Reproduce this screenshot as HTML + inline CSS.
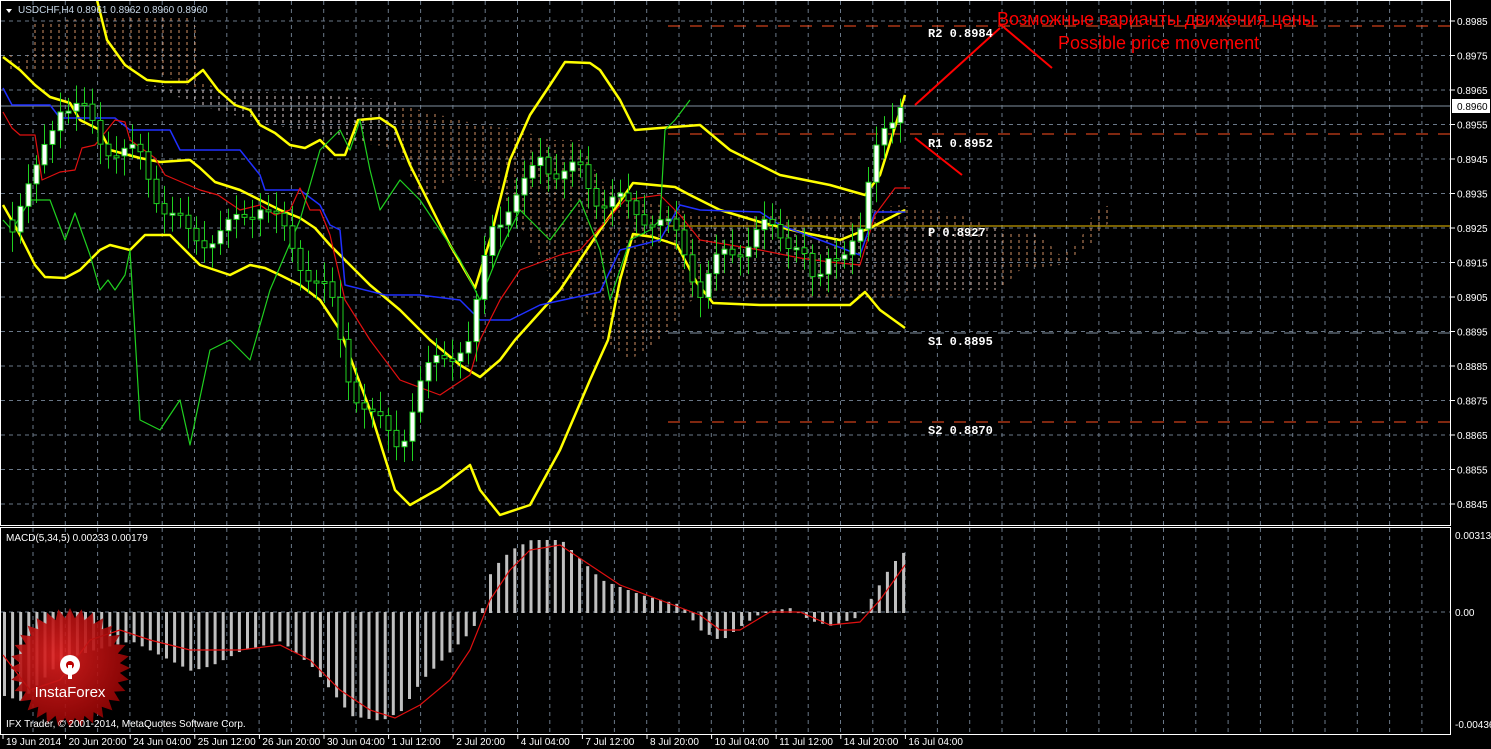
<!DOCTYPE html>
<html><head><meta charset="utf-8">
<style>
html,body{margin:0;padding:0;background:#000;width:1491px;height:749px;overflow:hidden}
svg{display:block}
text{font-family:"Liberation Sans",sans-serif}
.ax{fill:#fff;font-size:10px}
.mono{font-family:"Liberation Mono",monospace;fill:#fff;font-size:12px;font-weight:bold}
</style></head><body>
<svg id="s" width="1491" height="749" xmlns="http://www.w3.org/2000/svg">
<defs>
<pattern id="hatchO" width="8" height="6" patternUnits="userSpaceOnUse"><line x1="3" y1="0" x2="3" y2="3" stroke="#e8a070" stroke-width="1"/></pattern>
<pattern id="hatchW" width="8" height="6" patternUnits="userSpaceOnUse"><line x1="3" y1="0" x2="3" y2="3" stroke="#e0d0d0" stroke-width="1"/></pattern>
<radialGradient id="lg" cx="0.4" cy="0.4" r="0.7"><stop offset="0" stop-color="#e02020"/><stop offset="1" stop-color="#8a0000"/></radialGradient>
</defs>
<rect width="1491" height="749" fill="#000"/>
<g id="grid"></g>
<polygon points="3,50 25,65 35,22 60,20 100,18 190,16 200,35 200,80 230,95 245,105 400,105 480,125 520,130 550,140 580,140 600,180 620,190 640,200 660,205 700,215 760,215 860,215 880,208 900,205 960,215 1000,230 1040,235 1060,255 1080,240 1095,210 1110,205 1115,215 1090,245 1060,265 1020,270 1000,290 940,290 860,300 800,300 760,300 700,290 660,340 630,360 600,340 580,300 560,290 540,260 500,190 460,175 420,200 400,150 350,140 300,130 250,120 200,90 150,70 60,70 10,70" fill="url(#hatchO)" opacity="0.9"/>
<polygon points="145,85 400,100 400,140 350,140 300,130 250,120 200,105" fill="url(#hatchW)"/>
<polygon points="700,225 1000,225 1000,290 700,290" fill="url(#hatchW)" opacity="0.7"/>
<line x1="668" y1="26" x2="1451" y2="26" stroke="#ff5020" stroke-dasharray="12,10"/>
<line x1="668" y1="134" x2="1451" y2="134" stroke="#ff5020" stroke-dasharray="12,10"/>
<line x1="668" y1="226" x2="1451" y2="226" stroke="#f0c000"/>
<line x1="668" y1="333" x2="1451" y2="333" stroke="#8090a0" stroke-dasharray="12,10"/>
<line x1="668" y1="422" x2="1451" y2="422" stroke="#ff5020" stroke-dasharray="12,10"/>
<line x1="0" y1="106" x2="1451" y2="106" stroke="#8090a0"/>
<g id="ind"></g>
<g id="candles"></g>
<g id="macd"></g>
<line x1="915" y1="105" x2="1000" y2="28" stroke="#f00" stroke-width="2"/>
<line x1="1000" y1="24" x2="1052" y2="68" stroke="#f00" stroke-width="2"/>
<line x1="915" y1="138" x2="962" y2="175" stroke="#f00" stroke-width="2"/>
<text x="997" y="25" fill="#f00" font-size="18">Возможные варианты движения цены</text>
<text x="1058" y="49" fill="#f00" font-size="18">Possible price movement</text>
<text x="928" y="37" class="mono">R2 0.8984</text>
<text x="928" y="147" class="mono">R1 0.8952</text>
<text x="928" y="236" class="mono">P  0.8927</text>
<text x="928" y="345" class="mono">S1 0.8895</text>
<text x="928" y="434" class="mono">S2 0.8870</text>
<rect x="0.5" y="0.5" width="1450" height="525" fill="none" stroke="#fff"/>
<rect x="0.5" y="527.5" width="1450" height="207" fill="none" stroke="#fff"/>
<path d="M6 9 L12 9 L9 13Z" fill="#fff"/>
<text x="18" y="13" class="ax" style="fill:#c8d8e8">USDCHF,H4  0.8961 0.8962 0.8960 0.8960</text>
<text x="6" y="541" class="ax">MACD(5,34,5) 0.00233 0.00179</text>
<g transform="translate(70,668)">
<polygon id="star" fill="url(#lg)" opacity="0.9"/>
<circle cx="0" cy="-3" r="10" fill="#fff"/><circle cx="0" cy="-3" r="4" fill="#b00"/>
<rect x="-2" y="-3" width="4" height="14" fill="#fff"/>
<text x="0" y="29" text-anchor="middle" fill="#fff" font-size="15">InstaForex</text>
</g>
<text x="6" y="727" class="ax">IFX Trader, © 2001-2014, MetaQuotes Software Corp.</text>
<g id="axis" class="ax"></g>
</svg>
<script>
const NS="http://www.w3.org/2000/svg";
function el(p,t,a,txt){const e=document.createElementNS(NS,t);for(const k in a)e.setAttribute(k,a[k]);if(txt)e.textContent=txt;document.getElementById(p).appendChild(e);return e;}
for(let x=33;x<1450;x+=32.3){el('grid','line',{x1:x,y1:1,x2:x,y2:525,stroke:'#6a7888','stroke-dasharray':'4,4'});el('grid','line',{x1:x,y1:528,x2:x,y2:734,stroke:'#6a7888','stroke-dasharray':'4,4'});}
for(let i=0;i<15;i++){let y=21+i*34.5;el('grid','line',{x1:1,y1:y,x2:1450,y2:y,stroke:'#6a7888','stroke-dasharray':'4,4'});
 el('axis','line',{x1:1451,y1:y,x2:1455,y2:y,stroke:'#fff'});
 el('axis','text',{x:1457,y:y+4},(0.8985-i*0.001).toFixed(4));}
el('grid','line',{x1:1,y1:612,x2:1450,y2:612,stroke:'#6a7888','stroke-dasharray':'4,4'});
el('axis','rect',{x:1452,y:99,width:38,height:14,fill:'#fff'});
el('axis','text',{x:1457,y:110,style:'fill:#000'},'0.8960');
[['0.00313',539],['0.00',616],['-0.00436',728]].forEach(a=>el('axis','text',{x:1455,y:a[1]},a[0]));
const tl=['19 Jun 2014','20 Jun 20:00','24 Jun 04:00','25 Jun 12:00','26 Jun 20:00','30 Jun 04:00','1 Jul 12:00','2 Jul 20:00','4 Jul 04:00','7 Jul 12:00','8 Jul 20:00','10 Jul 04:00','11 Jul 12:00','14 Jul 20:00','16 Jul 04:00'];
tl.forEach((t,i)=>{let x=i==0?3:1+i*64.6;el('axis','line',{x1:x,y1:735,x2:x,y2:739,stroke:'#fff'});el('axis','text',{x:x+3,y:745},t);});
function interp(pts,x){for(let i=1;i<pts.length;i++){if(x<=pts[i][0]){const a=pts[i-1],b=pts[i];return a[1]+(b[1]-a[1])*(x-a[0])/(b[0]-a[0]);}}return pts[pts.length-1][1];}
function pl(pts,col,w){el('ind','polyline',{points:pts.map(p=>p.join(',')).join(' '),fill:'none',stroke:col,'stroke-width':w,'stroke-linejoin':'round'});}
// lower band
pl([[3,205],[20,235],[35,265],[45,277],[65,278],[80,270],[100,250],[110,245],[130,250],[145,235],[170,235],[185,250],[200,265],[215,270],[230,275],[250,265],[265,268],[280,275],[300,285],[320,300],[340,330],[370,410],[395,490],[410,505],[440,488],[470,465],[480,490],[500,515],[530,505],[560,450],[590,380],[608,340],[620,280],[633,234],[653,237],[677,245],[697,283],[713,303],[760,305],[820,305],[850,305],[865,292],[880,310],[905,328]],'#ff0',2.5);
// upper band
pl([[97,0],[107,40],[125,65],[147,80],[165,82],[188,82],[203,70],[218,90],[235,105],[250,110],[260,125],[275,133],[290,145],[305,148],[320,140],[335,155],[345,155],[358,120],[380,118],[395,128],[410,165],[420,185],[435,215],[450,245],[475,288],[490,240],[510,160],[530,115],[550,85],[565,62],[590,63],[600,70],[620,100],[635,130],[660,128],[700,125],[730,150],[780,175],[830,185],[865,195],[880,175],[905,95]],'#ff0',2.5);
// middle band
pl([[3,57],[20,70],[35,85],[50,97],[70,103],[80,120],[100,130],[110,150],[140,158],[160,162],[190,160],[200,168],[215,182],[240,190],[260,200],[280,210],[300,218],[315,228],[330,245],[350,265],[370,285],[400,310],[430,340],[460,365],[480,377],[500,360],[515,340],[560,290],[600,230],[633,183],[675,187],[690,195],[720,210],[760,222],[800,232],[840,240],[870,228],[905,210]],'#ff0',2.5);
// blue
pl([[3,88],[12,105],[50,105],[60,118],[115,118],[130,130],[170,130],[180,150],[240,150],[260,175],[265,190],[300,190],[320,205],[330,225],[340,230],[345,285],[385,295],[420,295],[460,300],[480,320],[510,320],[540,305],[600,292],[620,250],[660,240],[680,205],[700,210],[760,212],[780,225],[820,240],[860,255],[875,212],[905,212]],'#2030ff',1.5);
// red
pl([[3,112],[12,128],[20,135],[35,135],[42,180],[60,172],[75,170],[82,148],[95,145],[115,120],[125,122],[130,140],[155,158],[165,175],[200,190],[218,195],[240,210],[260,205],[275,215],[290,210],[300,188],[310,210],[320,210],[330,235],[345,300],[370,340],[400,380],[440,395],[470,375],[480,340],[500,300],[520,270],[560,255],[580,250],[625,200],[660,195],[680,215],[700,240],[760,250],[800,258],[830,262],[860,265],[875,215],[895,188],[910,188]],'#e01010',1.2);
// green
pl([[3,220],[12,230],[30,200],[50,200],[65,240],[75,213],[90,255],[100,290],[108,280],[115,290],[125,275],[130,250],[140,420],[160,430],[180,400],[190,445],[210,350],[230,340],[250,360],[270,290],[300,220],[320,150],[340,130],[350,150],[360,120],[370,170],[380,210],[400,180],[420,200],[440,230],[460,260],[480,300],[500,250],[520,210],[550,240],[580,200],[600,250],[610,300],[630,240],[650,230],[660,220],[665,130],[675,120],[690,100]],'#20d020',1.2);
const cp=[[12,220],[20,200],[35,180],[60,100],[80,110],[100,140],[140,160],[160,200],[190,240],[230,230],[260,200],[300,260],[330,300],[350,380],[370,420],[400,440],[420,390],[440,350],[470,350],[490,220],[520,200],[540,150],[560,180],[580,170],[600,200],[640,210],[680,240],[700,290],[720,260],[760,230],[800,240],[815,300],[830,250],[860,240],[880,120],[905,105]];
let prev=interp(cp,12);
for(let x=12;x<=905;x+=8){let c=interp(cp,x)+Math.sin(x*1.7)*12;let o=prev;let top=Math.min(o,c),bot=Math.max(o,c);if(bot-top<2)bot=top+2;
 el('candles','line',{x1:x+0.5,y1:top-8-Math.abs(Math.cos(x))*12,x2:x+0.5,y2:bot+8+Math.abs(Math.sin(x*3))*12,stroke:'#20d020'});
 el('candles','rect',{x:x-2,y:top,width:5,height:bot-top,fill:c<o?'#fff':'#000',stroke:'#20d020'});prev=c;}
const hp=[[3,695],[20,700],[40,680],[60,660],[90,650],[130,640],[150,650],[190,670],[210,665],[240,650],[280,640],[310,665],[330,690],[350,715],[380,720],[400,710],[420,680],[440,660],[470,630],[480,612],[490,570],[510,550],[530,540],[560,540],[580,560],[600,580],[640,595],[680,605],[700,630],[720,640],[740,625],[760,612],[790,608],[810,620],[830,625],[860,615],[875,590],[890,565],[905,550]];
for(let x=3;x<=908;x+=8.1){let y=interp(hp,x);el('macd','rect',{x:x,y:Math.min(y,612),width:3,height:Math.abs(y-612)+1,fill:'#c0c0c0'});}
el('macd','polyline',{points:'3,655 30,690 60,680 90,640 120,630 150,640 190,650 240,650 280,645 310,660 340,690 370,710 395,718 420,705 450,680 470,650 490,600 510,570 530,550 560,545 590,565 620,585 660,600 700,615 720,630 740,630 770,612 800,612 830,625 860,622 880,600 905,565',fill:'none',stroke:'#e01010','stroke-width':1.2});
let pts=[];for(let i=0;i<64;i++){let r=i%2?50:60,a=i*Math.PI/32;pts.push((r*Math.cos(a)).toFixed(1)+','+(r*Math.sin(a)).toFixed(1));}
document.getElementById('star').setAttribute('points',pts.join(' '));
</script>
</body></html>
